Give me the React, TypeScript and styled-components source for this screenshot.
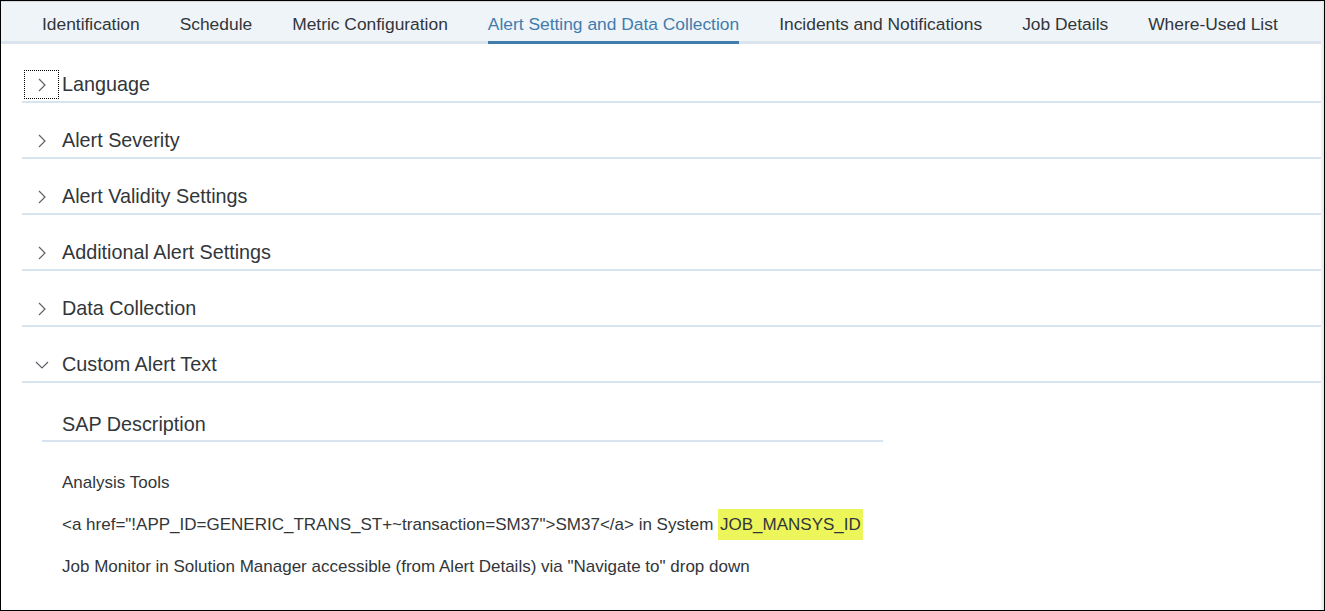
import React from 'react';
import styled, { createGlobalStyle } from 'styled-components';

const GlobalStyle = createGlobalStyle`
  body {
    margin: 0;
    font-family: "Liberation Sans", Arial, sans-serif;
    color: #32363a;
    background: #fff;
  }
`;

const tabs = [
  'Identification',
  'Schedule',
  'Metric Configuration',
  'Alert Setting and Data Collection',
  'Incidents and Notifications',
  'Job Details',
  'Where-Used List',
];

const panels = [
  { title: 'Language', focused: true },
  { title: 'Alert Severity' },
  { title: 'Alert Validity Settings' },
  { title: 'Additional Alert Settings' },
  { title: 'Data Collection' },
];

function ChevronRight() {
  return (
    <svg width="8" height="14" viewBox="0 0 8 14">
      <polyline points="1,1 7,7 1,13" fill="none" stroke="#5e6266" strokeWidth="1.2" />
    </svg>
  );
}

function ChevronDown() {
  return (
    <svg width="14" height="8" viewBox="0 0 14 8">
      <polyline points="1,1 7,7 13,1" fill="none" stroke="#5e6266" strokeWidth="1.2" />
    </svg>
  );
}

function Panel({ title, expanded, focused, children }: {
  title: string;
  expanded?: boolean;
  focused?: boolean;
  children?: React.ReactNode;
}) {
  return (
    <>
      <PanelHeader>
        <Toggle $focused={focused}>
          {expanded ? <ChevronDown /> : <ChevronRight />}
        </Toggle>
        <PanelTitle>{title}</PanelTitle>
      </PanelHeader>
      {expanded && children}
    </>
  );
}

export default function App() {
  return (
    <>
      <GlobalStyle />
      <Frame>
        <Main>
          <TabBar>
            {tabs.map((t) => (
              <Tab key={t} $active={t === 'Alert Setting and Data Collection'}>{t}</Tab>
            ))}
          </TabBar>
          <Content>
            {panels.map((p) => (
              <Panel key={p.title} title={p.title} focused={p.focused} />
            ))}
            <Panel title="Custom Alert Text" expanded>
              <Section>
                <SectionHeader>SAP Description</SectionHeader>
                <SectionBody>
                  <Para>Analysis Tools</Para>
                  <Para>
                    {'<a href="!APP_ID=GENERIC_TRANS_ST+~transaction=SM37">SM37</a> in System '}
                    <Mark>JOB_MANSYS_ID</Mark>
                  </Para>
                  <Para>Job Monitor in Solution Manager accessible (from Alert Details) via "Navigate to" drop down</Para>
                </SectionBody>
              </Section>
            </Panel>
          </Content>
        </Main>
        <ScrollEdge />
      </Frame>
    </>
  );
}

const Frame = styled.div`
  width: 1325px;
  height: 611px;
  box-sizing: border-box;
  border: 1px solid #000;
  display: flex;
  overflow: hidden;
  background: #fff;
`;

const Main = styled.div`
  flex: 1;
  min-width: 0;
  display: flex;
  flex-direction: column;
`;

const ScrollEdge = styled.div`
  width: 3px;
  background: linear-gradient(to right, #f6f6f6, #e4e4e4);
`;

const TabBar = styled.div`
  display: flex;
  height: 39px;
  padding-left: 21px;
  background: #eff4f9;
  border-top: 1px solid #d3d8dc;
  border-bottom: 3px solid #d9e4ef;
`;

const Tab = styled.div<{ $active?: boolean }>`
  display: flex;
  align-items: center;
  margin: 0 20px -3px;
  padding-top: 5px;
  font-size: 17.4px;
  white-space: nowrap;
  color: ${(p) => (p.$active ? '#427cac' : '#32363a')};
  border-bottom: 3px solid ${(p) => (p.$active ? '#427cac' : 'transparent')};
`;

const Content = styled.div`
  display: flex;
  flex-direction: column;
  padding: 3px 0 0 21px;
`;

const PanelHeader = styled.div`
  display: flex;
  align-items: center;
  padding: 23px 0 2px 2px;
  border-bottom: 2px solid #d7e3ef;
`;

const Toggle = styled.div<{ $focused?: boolean }>`
  width: 35px;
  height: 29px;
  box-sizing: border-box;
  display: flex;
  align-items: center;
  justify-content: center;
  border: 1px dotted ${(p) => (p.$focused ? '#000' : 'transparent')};
`;

const PanelTitle = styled.div`
  margin-left: 3px;
  font-size: 19.8px;
  color: #32363a;
`;

const Section = styled.div`
  margin-left: 20px;
  width: 841px;
`;

const SectionHeader = styled.div`
  padding: 27px 0 1px 20px;
  line-height: 29px;
  font-size: 19.8px;
  border-bottom: 2px solid #d7e3ef;
`;

const SectionBody = styled.div`
  padding: 14px 0 0 20px;
`;

const Para = styled.div`
  margin-top: 11px;
  line-height: 31px;
  font-size: 17px;
  white-space: nowrap;
`;

const Mark = styled.span`
  display: inline-block;
  padding: 0 2px;
  background: #ecf65a;
`;
